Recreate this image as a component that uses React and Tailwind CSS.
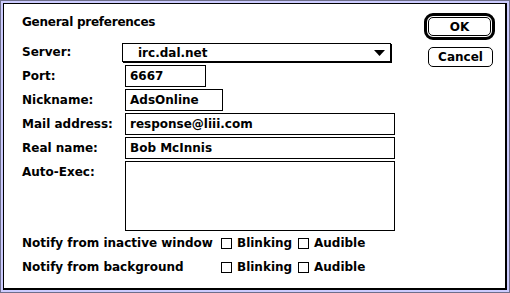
import React from "react";

function Row({ label, children, className = "" }) {
  return (
    <div className={`flex items-start ${className}`}>
      <div className="w-[103px] h-[22px] leading-[22px] shrink-0">{label}</div>
      {children}
    </div>
  );
}

function TextBox({ width, value, tall }) {
  return (
    <div className={`${width} ${tall ? "h-[70px]" : "h-[22px]"} border border-black px-[4px] leading-[20px] whitespace-nowrap`}>
      {value}
    </div>
  );
}

function Check({ label, width }) {
  return (
    <div className={`flex items-center ${width}`}>
      <span className="w-[11px] h-[11px] border border-black shrink-0" />
      <span className="ml-[5px]">{label}</span>
    </div>
  );
}

export default function App() {
  return (
    <div className="w-[510px] h-[293px] bg-[#ccccff] border border-[#6e6e8a] p-[2px] font-['DejaVu_Sans',sans-serif] font-bold text-[12px] text-black">
      <div className="w-full h-full bg-white border-l border-t border-r-2 border-b-2 border-black flex pl-[18px] pt-[9px]">
        <div className="w-[373px] flex flex-col">
          <div className="h-[18px] leading-[19px] tracking-[-0.25px]">General preferences</div>

          <div className="flex items-start mt-[12px] h-[20px]">
            <div className="w-[103px] h-[19px] leading-[19px]">Server:</div>
            <div className="-ml-[3px] w-[269px] h-[19px] border border-black shadow-[1px_1px_0_#000] flex items-center justify-between pl-[15px] pr-[5px]">
              <span>irc.dal.net</span>
              <svg width="11" height="6" viewBox="0 0 11 6">
                <path d="M0 0H11L5.5 6Z" fill="#000" />
              </svg>
            </div>
          </div>

          <Row label="Port:" className="mt-[2px]">
            <TextBox width="w-[81px]" value="6667" />
          </Row>
          <Row label="Nickname:" className="mt-[2px]">
            <TextBox width="w-[98px]" value="AdsOnline" />
          </Row>
          <Row label="Mail address:" className="mt-[2px]">
            <TextBox width="w-[270px]" value="response@liii.com" />
          </Row>
          <Row label="Real name:" className="mt-[2px]">
            <TextBox width="w-[270px]" value="Bob McInnis" />
          </Row>
          <Row label="Auto-Exec:" className="mt-[2px]">
            <TextBox width="w-[270px]" value="" tall />
          </Row>

          <div className="flex items-center h-[16px] mt-[4px] whitespace-nowrap">
            <div className="w-[199px]">Notify from inactive window</div>
            <Check label="Blinking" width="w-[77px]" />
            <Check label="Audible" />
          </div>
          <div className="flex items-center h-[16px] mt-[8px] whitespace-nowrap">
            <div className="w-[199px]">Notify from background</div>
            <Check label="Blinking" width="w-[77px]" />
            <Check label="Audible" />
          </div>
        </div>

        <div className="ml-[29px] flex flex-col">
          <div className="w-[71px] h-[27px] border-[3px] border-black rounded-[9px] p-[1px]">
            <div className="w-full h-full border border-black rounded-[5px] flex items-center justify-center">OK</div>
          </div>
          <div className="ml-[4px] mt-[7px] w-[65px] h-[20px] border border-black rounded-[5px] flex items-center justify-center">
            Cancel
          </div>
        </div>
      </div>
    </div>
  );
}
